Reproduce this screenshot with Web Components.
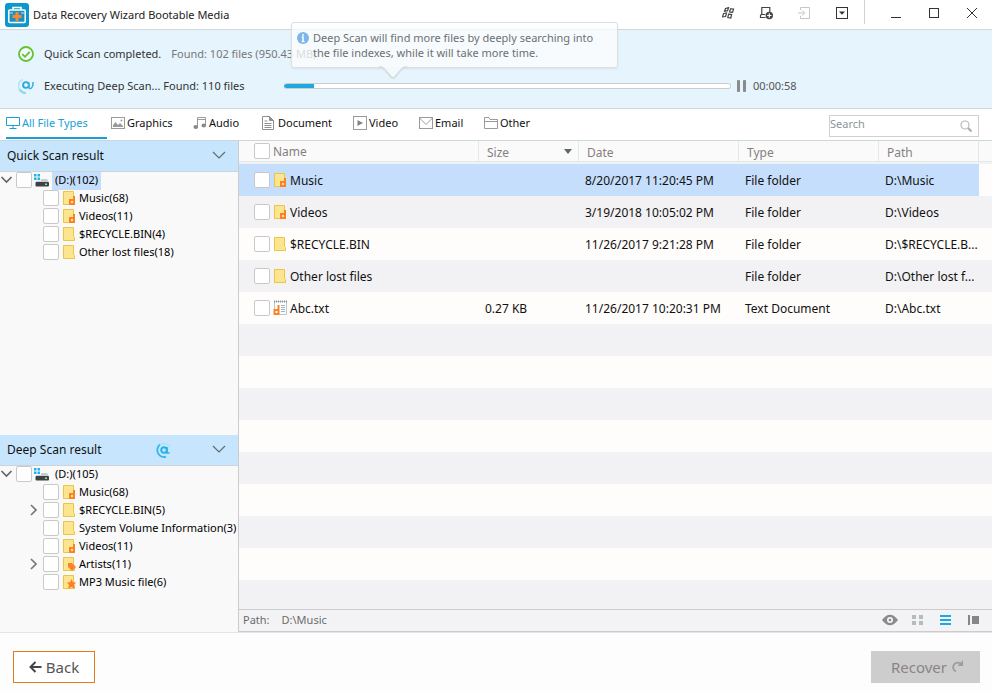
<!DOCTYPE html>
<html lang="en">
<head>
<meta charset="utf-8">
<title>Data Recovery Wizard Bootable Media</title>
<style>
  html, body { height: 100%; margin: 0; }
  body { font: 11px/16px "Noto Sans", "Open Sans", sans-serif; color: #111; background: #fdfdfd; }
</style>
</head>
<body>
<recovery-app></recovery-app>
<script>
const ICONS = {
  app: [24, 24, '<rect width="24" height="24" rx="3" fill="#0d98cc"/><path d="M8 6.500V4.500h8v2" fill="none" stroke="#fff" stroke-width="1.600"/><rect x="3.800" y="7" width="16.400" height="12.500" rx="1" fill="#1b8fc4" stroke="#fff" stroke-width="1.500"/><path d="M4 10h4M16 10h4" stroke="#bfe4f4"/><path d="M12 9v9M7.500 13.500h9" stroke="#f58a33" stroke-width="3"/>'],
  windows: [14, 14, '<g fill="none" stroke="#444" stroke-width="1.200"><path d="M4.500 2.500l3-.800-.900 3-3 .500zM9.500 2.800l3 .200-.900 3.300-3-.400zM2.500 7.500l3-.500-.900 3.500-3 .300zM7.600 8.200l3 .300-.800 3.500-3-.500z"/></g>'],
  export: [14, 14, '<path d="M5.500 11.500h-4v-2l1.300-1.500V1.500h8V6M2.800 8.500h3.500M1.500 11.500h5" fill="none" stroke="#444" stroke-width="1.200"/><circle cx="10.300" cy="9.500" r="3.700" fill="#444"/><path d="M10.300 7.300v4.400M8.100 9.500h4.400" stroke="#fff" stroke-width="1.200"/>'],
  import: [14, 14, '<path d="M3.500 4V1.500h9v11h-9V10M1 7h6.500M5 4.300L7.700 7 5 9.700" fill="none" stroke="#c6c6c6"/>'],
  menu: [14, 14, '<rect x="1.500" y="1.500" width="11" height="11" fill="none" stroke="#333"/><path d="M4 5.500h6l-3 3.200z" fill="#333"/>'],
  minimize: [14, 14, '<path d="M2 11.500h10" stroke="#333"/>'],
  maximize: [14, 14, '<rect x="2.500" y="2.500" width="9" height="9" fill="none" stroke="#333"/>'],
  close: [14, 14, '<path d="M2 2l10 10M12 2L2 12" stroke="#333"/>'],
  done: [16, 16, '<circle cx="8" cy="8" r="7" fill="#fff" fill-opacity=".500" stroke="#63c22f" stroke-width="1.800"/><path d="M4.300 8.200l2.700 2.600 4.700-5" fill="none" stroke="#63c22f" stroke-width="1.800"/>'],
  scan: [16, 16, '<g fill="none"><path d="M5 1.500A7 7 0 0 0 7 15" stroke="#b6e4f8" stroke-width="1.800"/><path d="M2 11.500a7 7 0 0 0 6 3.500" stroke="#8ad5f4" stroke-width="1.800"/><circle cx="8" cy="7" r="2.900" stroke="#27a9df" stroke-width="1.900"/><path d="M10.900 4.500v5q.800 2 2.600.500 1.800-1.800 1.500-6" stroke="#3bb2e4" stroke-width="1.600"/></g>'],
  spinner: [16, 16, '<g fill="none"><path d="M4 2.500A7 7 0 0 0 10 14.800" stroke="#35b9ee" stroke-width="1.900"/><path d="M4 2.500A7 7 0 0 1 14 5" stroke="#aee2f7" stroke-width="1.700"/><circle cx="8" cy="8" r="2.800" stroke="#22b2ec" stroke-width="1.900"/><path d="M10.900 5v6h2.600" stroke="#22b2ec" stroke-width="1.700"/></g>'],
  info: [12, 12, '<circle cx="6" cy="6" r="6" fill="#7db5ea"/><path d="M6 2v1.800M4.800 5H6v4.200M4.600 9.500h2.900" fill="none" stroke="#fff" stroke-width="1.500"/>'],
  pause: [10, 12, '<rect width="3" height="12" rx="1" fill="#8b8b8b"/><rect x="6" width="3" height="12" rx="1" fill="#8b8b8b"/>'],
  monitor: [14, 14, '<path d="M.500 1.500h13v8H.500zM7 9.500v3M3.500 12.500h7" fill="none" stroke="#1a9fd6"/>'],
  picture: [14, 14, '<rect x=".500" y="1.500" width="13" height="11" fill="none" stroke="#9a9a9a"/><path d="M2 11V9l2.500-3L7 9l2-2 3 3v1z" fill="#9a9a9a"/><circle cx="10.500" cy="4.500" r="1" fill="#9a9a9a"/>'],
  note: [14, 14, '<path d="M4.500 10.500V1.500h8v8M4.500 3.500h8" fill="none" stroke="#9a9a9a"/><ellipse cx="2.800" cy="11" rx="2.400" ry="2" fill="#8a8a8a"/><ellipse cx="10.800" cy="9.500" rx="2.300" ry="1.900" fill="#8a8a8a"/>'],
  doc: [14, 14, '<path d="M.500.500h7l4 4v9H.500z" fill="none" stroke="#8f8f8f"/><path d="M7.500.500v4h4z" fill="#8f8f8f" stroke="#8f8f8f"/><path d="M2.500 5h3M2.500 7.500h7M2.500 9.500h7M2.500 11.500h7" stroke="#8f8f8f"/>'],
  play: [14, 14, '<rect x=".500" y=".500" width="13" height="13" fill="none" stroke="#9a9a9a"/><path d="M4.500 4l5.500 3-5.500 3z" fill="#858585"/>'],
  mail: [14, 14, '<rect x=".500" y="1.500" width="13" height="11" fill="none" stroke="#9a9a9a"/><path d="M.500 2L7 8.500 13.500 2" fill="none" stroke="#9a9a9a"/>'],
  folderline: [14, 14, '<path d="M.500 12.500v-11h4.500l1 2h7.500v9zM.500 5.500h13" fill="none" stroke="#9a9a9a"/>'],
  search: [12, 12, '<circle cx="5" cy="5" r="4" fill="none" stroke="#bbb" stroke-width="1.200"/><path d="M8 8l3.500 3.500" stroke="#aaa" stroke-width="2"/>'],
  down: [14, 8, '<path d="M1 1l6 6 6-6" fill="none" stroke="#5e6c70" stroke-width="1.200"/>'],
  open: [13, 16, '<path d="M1.500 5l5 5 5-5" fill="none" stroke="#666" stroke-width="1.700"/>'],
  shut: [13, 16, '<path d="M4 3l5 5-5 5" fill="none" stroke="#777" stroke-width="1.700"/>'],
  drive: [15, 16, '<path d="M0 2h2.500v2.500H0zM3.500 2H6v2.500H3.500zM0 5.500h2.500V8H0zM3.500 5.500H6V8H3.500z" fill="#1fb4ee"/><path d="M7 7h6l2 3.500H2V9h5z" fill="#c9cdcf"/><rect x="1.500" y="10" width="13.500" height="4.500" rx="1" fill="#3c4246"/><rect x="11" y="11.500" width="2" height="1.500" fill="#9fdc9f"/>'],
  folder: [15, 16, ''],
  'folder-d': [15, 16, '<path d="M13 6v9M9 10h4v4H9z" fill="none" stroke="#fb8326" stroke-width="2"/>'],
  'folder-tag': [15, 16, '<path d="M7 7h4l4 4-4 4-4-4z" fill="#fb8326"/>'],
  'folder-star': [15, 16, '<path d="M10.500 5l1.500 3.200 3 .300-2 2.500.800 3.800-3.300-1.700L7 14.800l1-3.800L6 8.500l3-.300z" fill="#fb8326"/>'],
  text: [15, 16, '<path d="M2.500 1.500h12v13h-12z" fill="#fbfdfe" stroke="#b9c6cd"/><path d="M2 1.500h13" stroke="#8d9aa1" stroke-width="2" stroke-dasharray="1 1"/><path d="M9 5.500h4M9 7.500h4M9 9.500h4M9 11.500h4" stroke="#9fb4c0"/><path d="M6.500 5v10M2.500 10h4v4h-4z" fill="none" stroke="#fb8326" stroke-width="2"/>'],
  eye: [16, 12, '<path d="M0 6Q8-4.500 16 6 8 16.500 0 6z" fill="#8a8a8a"/><circle cx="8" cy="6" r="3" fill="#f4f4f5"/><circle cx="8" cy="6" r="1.300" fill="#8a8a8a"/>'],
  grid: [12, 12, '<path d="M0 1h4v4H0zM7 1h4v4H7zM0 7h4v4H0zM7 7h4v4H7z" fill="#b4bcbe"/>'],
  list: [12, 12, '<path d="M0 1h11v2H0zM0 5h11v2H0zM0 9h11v2H0z" fill="#1fa8e0"/>'],
  detail: [12, 12, '<path d="M0 1h2v10H0zM4 2h7v8H4z" fill="#8a8585"/>'],
  back: [13, 12, '<path d="M12.500 6H2M6.500 1L1.500 6l5 5" fill="none" stroke="#444" stroke-width="2"/>'],
  redo: [13, 13, '<path d="M5 11.500A4.600 4.600 0 1 1 10 4" fill="none" stroke="#a09c9a" stroke-width="1.800"/><path d="M12 0v6H6.500z" fill="#a09c9a"/>'],
};
const SHEET = '<path d="M2.500 1.500h10v9l1 1v3h-11z" fill="#fde58f" stroke="#e9c646"/>';
for (const k of ['folder', 'folder-d', 'folder-tag', 'folder-star']) ICONS[k][2] = SHEET + ICONS[k][2];

class BaseElement extends HTMLElement {
  constructor() { super(); this.attachShadow({ mode: 'open' }); }
  connectedCallback() { this.shadowRoot.innerHTML = `<style>${BaseElement.common}${this.css()}</style>${this.html()}`; }
  css() { return ''; }
  html() { return ''; }
}
BaseElement.common = `
  *, :host { box-sizing: border-box; }
  button { font: inherit; color: inherit; background: none; border: 0; padding: 0; margin: 0; display: flex; align-items: center; justify-content: center; }
  input[type=checkbox] { appearance: none; width: 16px; height: 16px; margin: 0; flex: none; border: 1px solid #c9c9c9; border-radius: 2px; background: #fff; }
`;

customElements.define('ui-icon', class extends BaseElement {
  css() { return ':host{display:block;flex:none} svg{display:block}'; }
  html() {
    const [w, h, body] = ICONS[this.getAttribute('name')];
    return `<svg width="${w}" height="${h}" viewBox="0 0 ${w} ${h}" aria-hidden="true">${body}</svg>`;
  }
});

customElements.define('title-bar', class extends BaseElement {
  css() { return `
    :host { display: flex; align-items: center; height: 30px; padding: 0 4px 0 5px; gap: 6px; background: #fff; border-bottom: 1px solid #d3d7da; }
    h1 { font: inherit; margin: 0 auto 0 -2px; color: #222; }
    button { width: 32px; height: 24px; margin-bottom: 3px; }
    i { width: 1px; height: 24px; background: #d2d2d2; margin: 0 9px 6px 0; }`; }
  html() {
    const b = (n, l) => `<button aria-label="${l}"><ui-icon name="${n}"></ui-icon></button>`;
    return `<ui-icon name="app"></ui-icon><h1><slot></slot></h1>${b('windows', 'Start')}${b('export', 'Save scan')}${b('import', 'Load scan')}${b('menu', 'Menu')}<i></i>${b('minimize', 'Minimize')}${b('maximize', 'Maximize')}${b('close', 'Close')}`;
  }
});

customElements.define('info-tip', class extends BaseElement {
  css() { return `
    :host { display: flex; gap: 4px; padding: 7px 5px; color: #6c7072; line-height: 15px; background: rgba(252,253,254,.75); border: 1px solid #dde0e2; border-radius: 3px; box-shadow: 0 1px 2px rgba(0,0,0,.08); }
    ui-icon { margin-top: 2px; }
    svg { position: absolute; left: 87px; top: 43px; }`; }
  html() { return '<ui-icon name="info"></ui-icon><span><slot></slot></span><svg width="30" height="14"><path d="M0 1q4 0 6 3l6 7q2 2 4 0l6-7q2-3 6-3" fill="#f4f9fc" stroke="#d9dee0" stroke-width="2"/></svg>'; }
});

customElements.define('scan-banner', class extends BaseElement {
  css() { return `
    :host { display: block; position: relative; height: 79px; padding: 8px 0 0 18px; background: #e6f4fd; border-bottom: 1px solid #cfd6dc; color: #333; }
    div { display: flex; align-items: center; height: 32px; gap: 10px; }
    .found { color: #777; }
    .run span { width: 230px; }
    progress { appearance: none; flex: 1; min-width: 80px; height: 6px; border: 1px solid #ccc; border-left: 0; border-radius: 3px; background: #fff; overflow: hidden; }
    progress::-webkit-progress-bar { background: #fff; }
    progress::-webkit-progress-value { background: #1fa8de; }
    button { margin-left: -4px; }
    time { width: 239px; margin-left: -4px; color: #555; }
    info-tip { position: absolute; left: 291px; top: -8px; width: 327px; height: 46px; font-size: 11px; }`; }
  html() { return `
    <div><ui-icon name="done"></ui-icon><span>Quick Scan completed.</span><span class="found">Found: 102 files (950.43 MB)</span></div>
    <div class="run"><ui-icon name="scan"></ui-icon><span>Executing Deep Scan... Found: 110 files</span><progress value="6.7" max="100" aria-label="Deep scan"></progress><button aria-label="Pause"><ui-icon name="pause"></ui-icon></button><time>00:00:58</time></div>
    <info-tip>Deep Scan will find more files by deeply searching into<br>the file indexes, while it will take more time.</info-tip>`; }
});

customElements.define('type-tabs', class extends BaseElement {
  css() { return `
    :host { display: flex; height: 32px; padding: 0 13px 0 6px; border-bottom: 1px solid #cbd6de; background: #fff; justify-content: space-between; }
    nav { display: grid; grid-template-columns: 105px 82px 69px 91px 66px 65px auto; }
    button { gap: 2px; height: 30px; padding: 0 14px 1px 0; justify-self: start; border-bottom: 2px solid transparent; color: #111; }
    button[aria-current] { width: 101px; justify-content: start; color: #1a9fd6; border-color: #1a9fd6; }
    label { display: flex; justify-content: space-between; align-items: center; width: 150px; height: 22px; margin-top: 6px; padding-right: 6px; border: 1px solid #d0d0d0; background: #fff; }
    input { font: inherit; border: 0; padding: 0 0 4px; width: 120px; outline: 0; background: none; }
    input::placeholder { color: #8b9696; }`; }
  html() {
    const t = [['monitor', 'All File Types'], ['picture', 'Graphics'], ['note', 'Audio'], ['doc', 'Document'], ['play', 'Video'], ['mail', 'Email'], ['folderline', 'Other']];
    return `<nav>${t.map(([i, s], k) => `<button${k ? '' : ' aria-current="true"'}><ui-icon name="${i}"></ui-icon>${s}</button>`).join('')}</nav><label><input type="text" placeholder="Search" aria-label="Search"><ui-icon name="search"></ui-icon></label>`;
  }
});

customElements.define('tree-row', class extends BaseElement {
  css() { return `
    :host { display: flex; height: 18px; line-height: 16px; gap: 3px; color: #000; white-space: nowrap; }
    :host([child]) { padding-left: 27px; }
    button, i { width: 13px; height: 16px; flex: none; }
    label { display: flex; gap: 2px; }
    span { margin-left: 1px; }
    :host(:not([child])) span { padding: 0 3px; }
    :host([selected]) span { background: #c5defb; }`; }
  html() {
    const a = this.getAttribute('arrow');
    return `${a ? `<button aria-label="Toggle"><ui-icon name="${a}"></ui-icon></button>` : '<i></i>'}<label><input type="checkbox"><ui-icon name="${this.getAttribute('icon')}"></ui-icon><span><slot></slot></span></label>`;
  }
});

customElements.define('scan-panel', class extends BaseElement {
  css() { return `
    :host { display: block; overflow: hidden; }
    header { display: flex; align-items: center; height: 31px; padding: 0 12px 0 7px; background: #c7e6fd; border-bottom: 1px solid #cdd3d8; }
    h2 { font-weight: 400; font-size: 12px; margin: 0 auto 0 0; color: #111; }
    header ui-icon { margin-right: 40px; }
    header button ui-icon { margin: 0 0 3px; }`; }
  html() { return `<header><h2>${this.getAttribute('heading')}</h2>${this.hasAttribute('busy') ? '<ui-icon name="spinner"></ui-icon>' : ''}<button aria-label="Collapse"><ui-icon name="down"></ui-icon></button></header><slot></slot>`; }
});

customElements.define('scan-sidebar', class extends BaseElement {
  css() { return `
    :host { display: flex; flex-direction: column; width: 239px; flex: none; padding-bottom: 1px; background: #f9f9f9; border-right: 1px solid #cbcccd; }
    scan-panel { flex: 3 1 0; min-height: 0; } scan-panel[busy] { flex-grow: 2; }`; }
  html() {
    const rows = l => l.map(([t, i, a]) => `<tree-row child icon="${i}"${a ? ' arrow="shut"' : ''}>${t}</tree-row>`).join('');
    return `<scan-panel heading="Quick Scan result"><tree-row selected arrow="open" icon="drive">(D:)(102)</tree-row>${rows([['Music(68)', 'folder-d'], ['Videos(11)', 'folder-d'], ['$RECYCLE.BIN(4)', 'folder'], ['Other lost files(18)', 'folder']])}</scan-panel>
    <scan-panel heading="Deep Scan result" busy><tree-row arrow="open" icon="drive">(D:)(105)</tree-row>${rows([['Music(68)', 'folder-d'], ['$RECYCLE.BIN(5)', 'folder', 1], ['System Volume Information(3)', 'folder'], ['Videos(11)', 'folder-d'], ['Artists(11)', 'folder-tag', 1], ['MP3 Music file(6)', 'folder-star']])}</scan-panel>`;
  }
});

customElements.define('file-table', class extends BaseElement {
  css() { return `
    :host { display: block; flex: 1; min-height: 0; overflow: hidden; font-size: 12px; background: linear-gradient(#fffdfb 32px, #f2f2f4 32px) 0 23px / 100% 64px; }
    table { width: 100%; table-layout: fixed; border-collapse: separate; border-spacing: 0; }
    col.size { width: 100px; } col.date { width: 160px; } col.type { width: 140px; } col.path { width: 100px; } col.end { width: 13px; }
    th { height: 21px; padding: 3px 8px 0; font-weight: 400; text-align: left; color: #85807e; background: #fafafa; border: solid #e2e9e9; border-width: 0 1px 1px 0; }
    th:last-child { border-right: 0; padding: 0; }
    tbody::before { content: ""; display: block; height: 2px; }
    td { height: 32px; padding: 2px 0 0 6px; color: #111; white-space: nowrap; }
    td:last-child { padding: 0; }
    th:first-child, td:first-child { padding: 0 0 0 15px; }
    label { display: flex; align-items: center; gap: 2px; }
    th label { height: 20px; }
    label span { margin-left: 1px; padding-top: 2px; }
    tr.sel td:not(:last-child) { background: #c5defb; }
    .sort { display: flex; justify-content: space-between; }
    .sort::after { content: ""; border: solid transparent; border-width: 5px 4px 0; border-top-color: #5c686a; margin: 4px -2px 0 0; align-self: flex-start; }`; }
  html() {
    const data = [['Music', 'folder-d', '', '8/20/2017 11:20:45 PM', 'File folder', 'D:\\Music'],
      ['Videos', 'folder-d', '', '3/19/2018 10:05:02 PM', 'File folder', 'D:\\Videos'],
      ['$RECYCLE.BIN', 'folder', '', '11/26/2017 9:21:28 PM', 'File folder', 'D:\\$RECYCLE.B...'],
      ['Other lost files', 'folder', '', '', 'File folder', 'D:\\Other lost f...'],
      ['Abc.txt', 'text', '0.27 KB', '11/26/2017 10:20:31 PM', 'Text Document', 'D:\\Abc.txt']];
    return `<table><colgroup><col><col class="size"><col class="date"><col class="type"><col class="path"><col class="end"></colgroup>
    <thead><tr><th><label><input type="checkbox"><span>Name</span></label></th><th><div class="sort">Size</div></th><th>Date</th><th>Type</th><th>Path</th><th></th></tr></thead>
    <tbody>${data.map(([n, i, ...c], k) => `<tr${k ? '' : ' class="sel"'}><td><label><input type="checkbox"><ui-icon name="${i}"></ui-icon><span>${n}</span></label></td>${c.map(v => `<td>${v}</td>`).join('')}<td></td></tr>`).join('')}</tbody></table>`;
  }
});

customElements.define('status-bar', class extends BaseElement {
  css() { return `
    :host { display: flex; align-items: center; height: 23px; padding: 0 12px 2px 4px; gap: 12px; background: #f3f3f5; border: solid #cbcccd; border-width: 1px 0; color: #6b6b6b; }
    div { display: flex; gap: 16px; margin-left: auto; align-items: center; }
    button:first-child { margin-right: -2px; }`; }
  html() {
    const b = (n, l) => `<button aria-label="${l}"><ui-icon name="${n}"></ui-icon></button>`;
    return `<span>Path:</span><span><slot></slot></span><div>${b('eye', 'Preview')}${b('grid', 'Icons')}${b('list', 'List')}${b('detail', 'Details')}</div>`;
  }
});

customElements.define('action-bar', class extends BaseElement {
  css() { return `
    :host { display: flex; justify-content: space-between; align-items: flex-start; height: 60px; padding: 18px 12px 0 13px; border-top: 1px solid #e3e4e5; background: #fdfdfd; font-size: 15px; }
    button { height: 32px; gap: 4px; padding-bottom: 1px; }
    .back { width: 82px; border: 1px solid #e37a1b; background: #fff; color: #555; }
    .go { width: 109px; padding-left: 4px; background: #cdcdcd; color: #8a8582; }`; }
  html() { return '<button class="back"><ui-icon name="back"></ui-icon>Back</button><button class="go" disabled>Recover<ui-icon name="redo"></ui-icon></button>'; }
});

customElements.define('recovery-app', class extends BaseElement {
  css() { return `
    :host { display: flex; flex-direction: column; min-height: 100vh; }
    main { display: flex; flex: 1; min-height: 0; }
    section { display: flex; flex-direction: column; flex: 1; min-width: 0; }`; }
  html() { return '<title-bar>Data Recovery Wizard Bootable Media</title-bar><scan-banner></scan-banner><type-tabs></type-tabs><main><scan-sidebar></scan-sidebar><section><file-table></file-table><status-bar>D:\\Music</status-bar></section></main><action-bar></action-bar>'; }
});
</script>
</body>
</html>
